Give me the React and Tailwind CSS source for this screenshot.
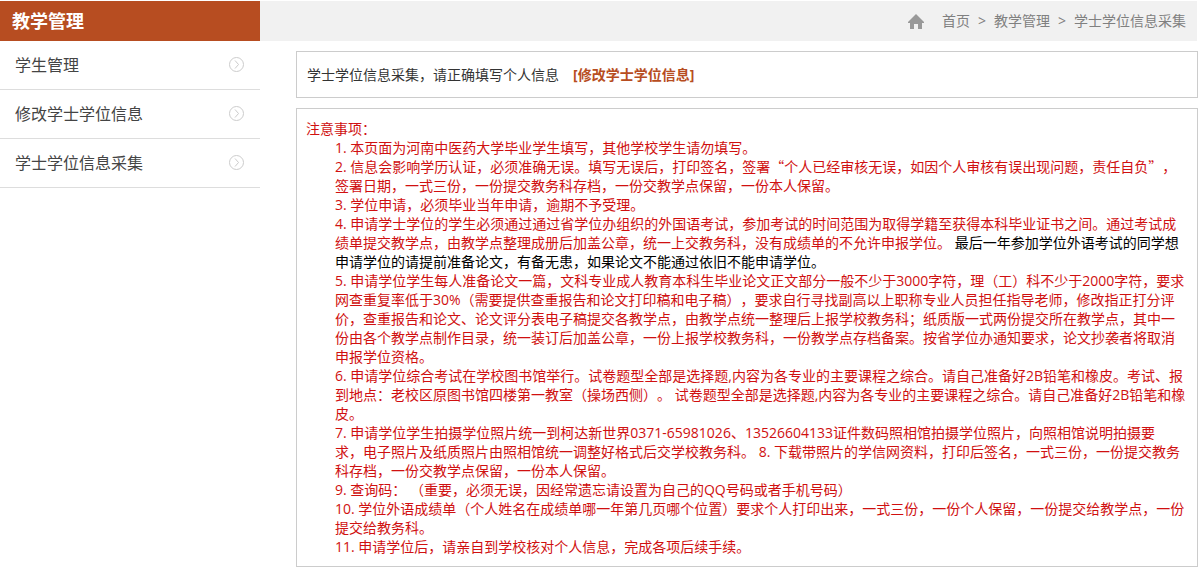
const menu = ["学生管理", "修改学士学位信息", "学士学位信息采集"];

const crumbs = ["首页", "教学管理", "学士学位信息采集"];

// full-width quotes have to come from the Chinese font
function Quote({ children }) {
	return <span className="font-['Noto_Sans_CJK_SC',sans-serif]">{children}</span>;
}

function HomeIcon() {
	return (
		<svg width="16" height="15" viewBox="0 0 16 15" fill="#999" aria-hidden="true">
			<path d="M8 0 L16 8 V9 H14 V15 H10 V10 H6 V15 H2 V9 H0 V8 Z" />
		</svg>
	);
}

function CircleArrow() {
	return (
		<svg width="15" height="15" viewBox="0 0 15 15" fill="none" stroke="#ccc" aria-hidden="true">
			<circle cx="7.5" cy="7.5" r="7" />
			<path d="M6 3.5 L9.5 7.5 L6 11.5" />
		</svg>
	);
}

function Sidebar() {
	return (
		<aside className="w-[260px] shrink-0">
			<h1 className="h-10 bg-[#b74d21] pl-3 text-lg leading-10 font-bold text-white">教学管理</h1>
			<nav>
				{menu.map(name => (
					<a
						key={name}
						href="#"
						className="flex h-[49px] items-center justify-between border-b border-[#ddd] pr-4 pb-px pl-[15px] text-base text-[#444]"
					>
						{name}
						<CircleArrow />
					</a>
				))}
			</nav>
		</aside>
	);
}

function Breadcrumb() {
	return (
		<nav className="mr-1 flex h-10 items-center justify-end bg-[#f1f1f1] pr-[11px] text-[#808080]">
			<HomeIcon />
			<ol className="ml-[18px] flex gap-2">
				{crumbs.map((name, i) => (
					<li key={name} className="flex gap-2">
						{i > 0 && <span>&gt;</span>}
						<a href="#">{name}</a>
					</li>
				))}
			</ol>
		</nav>
	);
}

function Notes() {
	return (
		<section className="border border-[#ccc] py-[10px] pr-[9px] pl-[9px] leading-[19px] text-[#d01010]">
			<h2>注意事项：</h2>
			<div className="pl-[29px]">
				<p>1. 本页面为河南中医药大学毕业学生填写，其他学校学生请勿填写。</p>
				<p>
					2. 信息会影响学历认证，必须准确无误。填写无误后，打印签名，签署<Quote>“</Quote>个人已经审核无误，如因个人审核有误出现问题，责任自负<Quote>”，</Quote>签署日期，一式三份，一份提交教务科存档，一份交教学点保留，一份本人保留。
				</p>
				<p>3. 学位申请，必须毕业当年申请，逾期不予受理。</p>
				<p>
					4. 申请学士学位的学生必须通过通过省学位办组织的外国语考试，参加考试的时间范围为取得学籍至获得本科毕业证书之间。通过考试成绩单提交教学点，由教学点整理成册后加盖公章，统一上交教务科，没有成绩单的不允许申报学位。{" "}
					<span className="text-black">最后一年参加学位外语考试的同学想申请学位的请提前准备论文，有备无患，如果论文不能通过依旧不能申请学位。</span>
				</p>
				<p>
					5. 申请学位学生每人准备论文一篇，文科专业成人教育本科生毕业论文正文部分一般不少于3000字符，理（工）科不少于2000字符，要求网查重复率低于30%（需要提供查重报告和论文打印稿和电子稿），要求自行寻找副高以上职称专业人员担任指导老师，修改指正打分评价，查重报告和论文、论文评分表电子稿提交各教学点，由教学点统一整理后上报学校教务科；纸质版一式两份提交所在教学点，其中一份由各个教学点制作目录，统一装订后加盖公章，一份上报学校教务科，一份教学点存档备案。按省学位办通知要求，论文抄袭者将取消申报学位资格。
				</p>
				<p>
					6. 申请学位综合考试在学校图书馆举行。试卷题型全部是选择题,内容为各专业的主要课程之综合。请自己准备好2B铅笔和橡皮。考试、报到地点：老校区原图书馆四楼第一教室（操场西侧）。 试卷题型全部是选择题,内容为各专业的主要课程之综合。请自己准备好2B铅笔和橡皮。
				</p>
				<p>
					7. 申请学位学生拍摄学位照片统一到柯达新世界0371-65981026、13526604133证件数码照相馆拍摄学位照片，向照相馆说明拍摄要
					<br />
					求，电子照片及纸质照片由照相馆统一调整好格式后交学校教务科。 8. 下载带照片的学信网资料，打印后签名，一式三份，一份提交教务科存档，一份交教学点保留，一份本人保留。
				</p>
				<p>9. 查询码： （重要，必须无误，因经常遗忘请设置为自己的QQ号码或者手机号码）</p>
				<p>
					10. 学位外语成绩单（个人姓名在成绩单哪一年第几页哪个位置）要求个人打印出来，一式三份，一份个人保留，一份提交给教学点，一份提交给教务科。
				</p>
				<p>11. 申请学位后，请亲自到学校核对个人信息，完成各项后续手续。</p>
			</div>
		</section>
	);
}

export default function App() {
	return (
		<div
			lang="zh-CN"
			className="flex bg-white pt-px font-['Open_Sans','Noto_Sans_CJK_SC',sans-serif] text-sm [text-spacing-trim:space-all]"
		>
			<Sidebar />
			<main className="min-w-0 flex-1">
				<Breadcrumb />
				<div className="mt-[10px] mr-[3px] ml-9 flex flex-col gap-[10px]">
					<div className="flex h-[47px] items-center gap-[14px] border border-[#ccc] px-[10px] text-[#333]">
						<p>学士学位信息采集，请正确填写个人信息</p>
						<a href="#" className="font-bold text-[#b74d21]">[修改学士学位信息]</a>
					</div>
					<Notes />
				</div>
			</main>
		</div>
	);
}
